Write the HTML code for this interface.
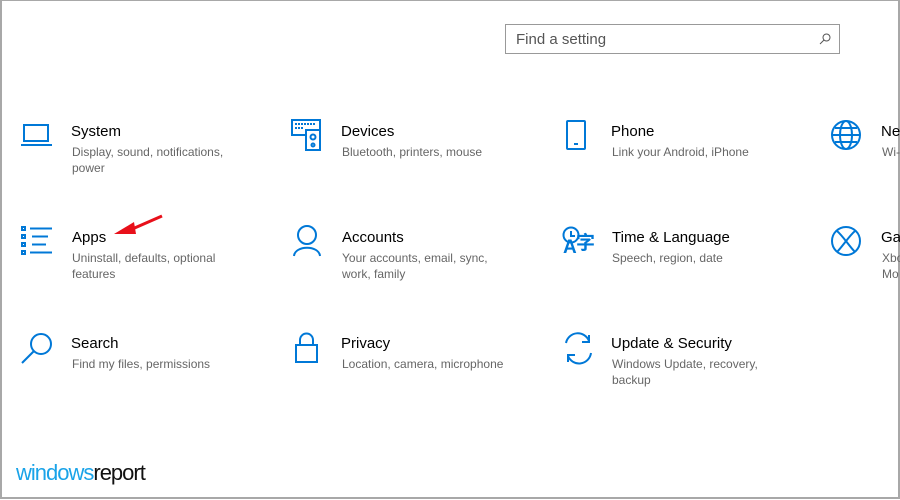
<!DOCTYPE html><html><head><style>
body{margin:0;width:900px;height:500px;overflow:hidden;background:#fff;font-family:"Liberation Sans",sans-serif}
.frame{position:absolute;left:0;top:0;width:896px;height:496px;border:2px solid #a8a8a8;border-top:1px solid #a8a8a8;}
.search{position:absolute;left:505px;top:24px;box-sizing:border-box;width:335px;height:30px;border:1px solid #999;font-size:15px;color:#555;padding:6px 10px}
.t{position:absolute;font-size:15px;color:#000;white-space:nowrap}
.d{position:absolute;font-size:12px;color:#666;line-height:16px;width:175px}
svg.i{position:absolute;stroke:#0078d7;fill:none;stroke-width:2}
</style></head><body>
<div class="frame"></div>
<div class="search">Find a setting
<svg style="position:absolute;right:8px;top:8px" width="12" height="12" viewBox="0 0 12 12"><circle cx="7.5" cy="4.5" r="3.5" fill="none" stroke="#555"/><path d="M5 7L1 11" stroke="#555"/></svg></div>

<svg class="i" style="left:21px;top:123px" width="32" height="26"><rect x="3" y="2" width="24" height="16"/><path d="M0 22H31"/></svg>
<div class="t" style="left:71px;top:123px">System</div>
<div class="d" style="left:72px;top:144px">Display, sound, notifications, power</div>

<svg class="i" style="left:21px;top:226px" width="32" height="30"><rect x="1" y="1" width="3" height="3"/><rect x="1" y="9" width="3" height="3"/><rect x="1" y="17" width="3" height="3"/><rect x="1" y="25" width="3" height="3"/><path d="M9 2.5H31M11 10.5H27M11 18.5H25M9 26.5H31"/></svg>
<div class="t" style="left:72px;top:229px">Apps</div>
<div class="d" style="left:72px;top:250px">Uninstall, defaults, optional features</div>
<svg style="position:absolute;left:110px;top:212px" width="56" height="26"><path d="M52 4L20 18" stroke="#e8101a" stroke-width="3"/><path d="M4 22L24 10L26 22Z" fill="#e8101a"/></svg>

<svg class="i" style="left:21px;top:331px" width="34" height="34"><circle cx="20" cy="13" r="10"/><path d="M13 20L1 32"/></svg>
<div class="t" style="left:71px;top:335px">Search</div>
<div class="d" style="left:72px;top:356px">Find my files, permissions</div>

<svg class="i" style="left:291px;top:119px" width="34" height="32"><rect x="1" y="1" width="28" height="15"/><rect x="15" y="11" width="14" height="20" fill="#fff"/><circle cx="22" cy="18" r="2.5"/><circle cx="22" cy="26" r="1.5"/><path d="M4 5h20M4 9h8" stroke-dasharray="2 1"/></svg>
<div class="t" style="left:341px;top:123px">Devices</div>
<div class="d" style="left:342px;top:144px">Bluetooth, printers, mouse</div>

<svg class="i" style="left:292px;top:225px" width="32" height="32"><circle cx="15" cy="10" r="9"/><path d="M2 31C3 20 27 20 28 31"/></svg>
<div class="t" style="left:342px;top:229px">Accounts</div>
<div class="d" style="left:342px;top:250px">Your accounts, email, sync, work, family</div>

<svg class="i" style="left:295px;top:332px" width="26" height="32"><rect x="1" y="13" width="21" height="17"/><path d="M5 13V8a6.5 6.5 0 0 1 13 0V13"/></svg>
<div class="t" style="left:341px;top:335px">Privacy</div>
<div class="d" style="left:342px;top:356px">Location, camera, microphone</div>

<svg class="i" style="left:566px;top:120px" width="22" height="32"><rect x="1" y="1" width="18" height="28" rx="1"/><path d="M8 24h4"/></svg>
<div class="t" style="left:611px;top:123px">Phone</div>
<div class="d" style="left:612px;top:144px">Link your Android, iPhone</div>

<svg class="i" style="left:561px;top:226px" width="34" height="32"><circle cx="10" cy="9" r="7.5"/><path d="M10 5v5h4"/></svg>
<div style="position:absolute;left:563px;top:237px;color:#0078d7;font-size:19px;font-weight:bold">A</div>
<div style="position:absolute;left:576px;top:228px;color:#0078d7;font-size:19px;font-weight:bold;font-family:'Noto Sans CJK SC',sans-serif">字</div>
<div class="t" style="left:612px;top:229px">Time &amp; Language</div>
<div class="d" style="left:612px;top:250px">Speech, region, date</div>

<svg class="i" style="left:561px;top:331px" width="34" height="34"><path d="M5 12A12 12 0 0 1 28 10M30 22A12 12 0 0 1 7 25"/><path d="M28 4V11H21M7 31V24H14"/></svg>
<div class="t" style="left:611px;top:335px">Update &amp; Security</div>
<div class="d" style="left:612px;top:356px">Windows Update, recovery, backup</div>

<svg class="i" style="left:831px;top:120px" width="32" height="32"><circle cx="15" cy="15" r="14"/><ellipse cx="15" cy="15" rx="6" ry="14"/><path d="M1 15H29M4 8H26M4 22H26"/></svg>
<div class="t" style="left:881px;top:123px">Ne</div>
<div class="d" style="left:882px;top:144px">Wi-</div>
<svg class="i" style="left:831px;top:226px" width="32" height="32" stroke-width="2.5"><circle cx="15" cy="15" r="14"/><path d="M6 5C12 10 18 20 24 26M24 5C18 10 12 20 6 26"/></svg>
<div class="t" style="left:881px;top:229px">Ga</div>
<div class="d" style="left:882px;top:250px">Xbo<br>Mo</div>

<div style="position:absolute;left:16px;top:460px;font-size:22px;letter-spacing:-1px;"><span style="color:#1aa3e8">windows</span><span style="color:#111">report</span></div>
</body></html>
